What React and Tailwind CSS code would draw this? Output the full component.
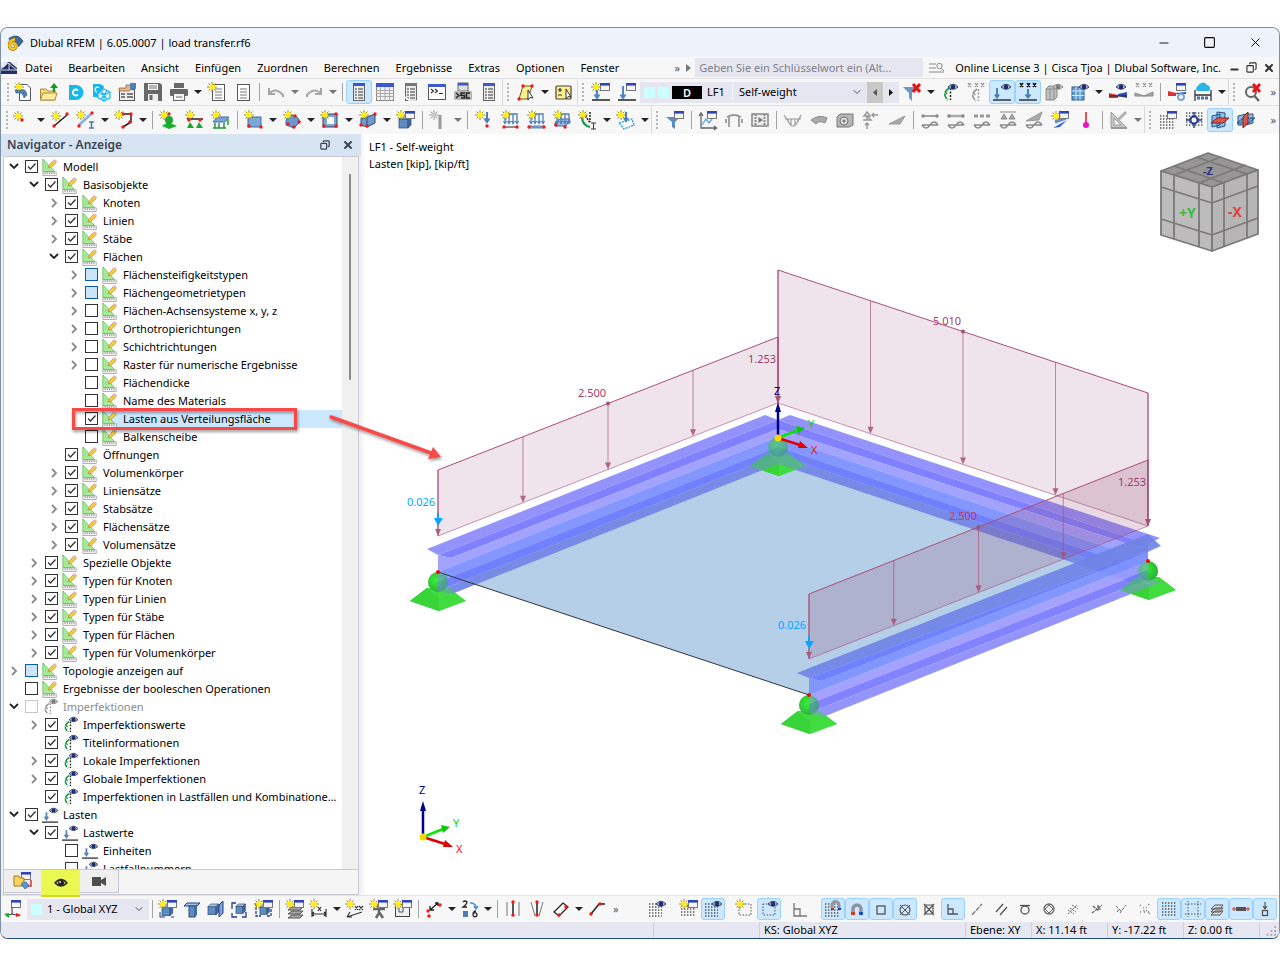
import React from 'react';
import { Minus, Square, X, Copy, ChevronDown } from 'lucide-react';

/* ---------- small parts shared by the toolbar icons ---------- */

const Star = ({ x = 4, y = 4, gray }) => (
  <g transform={`translate(${x} ${y})`}>
    <path d="M0-5V5M-5 0H5M-3.500-3.500L3.500 3.500M3.500-3.500L-3.500 3.500" stroke={gray ? '#a0a0a0' : '#9a8c20'} strokeWidth="1" />
    <circle r="2.8" fill={gray ? '#c8c8c8' : '#ffee10'} />
  </g>
);

const Eye = ({ x = 13, y = 4, gray }) => (
  <g transform={`translate(${x} ${y})`}>
    <path d="M-5 0Q0-5.500 5 0Q0 4.500 -5 0Z" fill={gray ? '#c4c4c4' : '#a9b4d0'} stroke={gray ? '#8a8a8a' : '#35426f'} strokeWidth="1" />
    <circle r="2.2" fill={gray ? '#7c7c7c' : '#1d2a6b'} />
  </g>
);

const Win = ({ x = 9, y = 0 }) => (
  <g transform={`translate(${x} ${y})`}>
    <rect x=".5" y=".5" width="9" height="7" fill="#f4f4f4" stroke="#777" />
    <rect width="10" height="2.6" fill="#2f45b5" />
  </g>
);

const Dot = ({ x, y, c = '#f01818' }) => <circle cx={x} cy={y} r="1.7" fill={c} />;

const Page = ({ x = 3, y = 1, w = 12, h = 16, gray }) => (
  <g>
    <rect x={x + 0.5} y={y + 0.5} width={w} height={h} fill="#fff" stroke={gray ? '#9a9a9a' : '#555'} />
    <path d={`M${x + 3} ${y + 5}H${x + w - 2}M${x + 3} ${y + 8}H${x + w - 2}M${x + 3} ${y + 11}H${x + w - 2}M${x + 3} ${y + 14}H${x + w - 2}`} stroke={gray ? '#aaa' : '#777'} />
  </g>
);

const Lens = () => (
  <g fill="none">
    <circle cx="8" cy="9" r="5" stroke="#666" strokeWidth="2" />
    <path d="M11.500 13L16 18" stroke="#666" strokeWidth="2.500" />
  </g>
);

const GridDots = ({ x = 1, y = 4, w = 14, h = 14 }) => (
  <g stroke="#555" strokeWidth="1.400" strokeDasharray="1.400 1.600">
    {[0, 3, 6, 9, 12].filter((r) => r <= h).map((r) => (
      <path key={r} d={`M${x} ${y + r + 1}h${w}`} />
    ))}
  </g>
);

const Cube = ({ x = 4, y = 5, s = 9 }) => (
  <g transform={`translate(${x} ${y})`} stroke="#2c4a70" strokeWidth=".7">
    <rect y={s / 3} width={s} height={s} fill="#5f8cc0" />
    <path d={`M0 ${s / 3}L${s / 3} 0H${s + s / 3}L${s} ${s / 3}Z`} fill="#a9c6e6" />
    <path d={`M${s} ${s / 3}L${s + s / 3} 0V${s}L${s} ${s + s / 3}Z`} fill="#3f6ea5" />
  </g>
);

const LoadArrows = () => (
  <g stroke="#4d7fb5" strokeWidth="1.300" fill="none">
    <path d="M4 3H16V8M4 3V12M8 3V12M12 3V12M16 5V12" />
    <path d="M2.500 10L4 12.500L5.500 10M6.500 10L8 12.500L9.500 10M10.500 10L12 12.500L13.500 10M14.500 10L16 12.500L17.500 10" />
  </g>
);

const Wave = ({ y = 14 }) => <path d={`M1 ${y}H17M1 ${y}Q5 ${y + 6} 9 ${y}Q13 ${y - 6} 17 ${y}`} fill="none" stroke="#8a8a8a" strokeWidth="1.500" />;

const Sheet = ({ gray }) => (
  <g>
    <rect x="3.500" y=".5" width="11" height="17" fill="#e8e8e8" stroke="#666" />
    <rect x="3" y="0" width="12" height="3" fill={gray ? '#777' : '#3c57cf'} />
    <path d="M5 6H13M5 9H13M5 12H13M5 15H13" stroke="#777" strokeWidth="1.500" />
    <path d="M7.500 4V17" stroke="#fff" />
  </g>
);

const Imperfection = ({ gray }) => (
  <g fill="none">
    <path d="M8 5Q0 11 7 17" stroke={gray ? '#999' : '#1d9a48'} strokeWidth="1.800" strokeDasharray="6 1" />
    <path d="M9.500 5V17" stroke={gray ? '#999' : '#222'} strokeWidth="1.500" strokeDasharray="2 1.500" />
    <path d="M4 9L6.500 11" stroke={gray ? '#999' : '#1d9a48'} strokeWidth="1.500" />
  </g>
);

const ICONS = {
  'Neues Modell': <g><path d="M5.500 1.500H13L16.500 5V17.500H5.500Z" fill="#fff" stroke="#555" /><path d="M1 7H6Q12 5 13 12L10 15Q9 10 6 10H2Z" fill="#4e7fb6" stroke="#315c8c" strokeWidth=".6" /><Star x={5} y={4} /></g>,
  'Öffnen': <g><path d="M.5 17V6H6L8 8H15V17Z" fill="#f6dc7c" stroke="#ad8c34" /><path d="M.5 17L3 10H17L15 17Z" fill="#fdeca4" stroke="#ad8c34" /><path d="M14 9V4" stroke="#139a2a" strokeWidth="2.500" /><path d="M10 5L14 0L18 5Z" fill="#139a2a" /></g>,
  'Dlubal Center': <g><path d="M3 2H10A7 7 0 0 1 10 17H3Z" fill="#17b7e8" /><path d="M12 7.500A3 3 0 1 0 12 11.500" fill="none" stroke="#fff" strokeWidth="1.800" /></g>,
  'Cloud-Modell': <g><path d="M1 1H8Q12 2 12 5L8 8V14H1Z" fill="#17b7e8" /><path d="M7 4.500A2.500 2.500 0 1 0 5 9" fill="none" stroke="#fff" strokeWidth="1.300" /><path d="M12 6L18 9V15L12 18L6 15V9ZM6 9L12 12L18 9M12 12V18M9 7.500L15 16.500M15 7.500L9 16.500" fill="#d8f3fb" stroke="#17b7e8" strokeWidth="1.200" /></g>,
  'Modelldaten': <g><rect x="1.500" y="6.500" width="15" height="11" fill="#eee" stroke="#555" /><path d="M3 11H7M9 11H15M3 14H7M9 14H15" stroke="#555" strokeWidth="1.500" /><path d="M1 5H8V2H12L15 5L11 8H1Z" fill="#e7b58b" stroke="#8a5a35" strokeWidth=".7" /><rect x="12" y="0" width="6" height="6" fill="#4e7fb6" /></g>,
  'Speichern': <g><path d="M0 0H16L18 2V18H0Z" fill="#696969" /><rect x="4" y="1" width="10" height="6" fill="#f4f4f4" /><path d="M5 3H13M5 5H13" stroke="#777" /><rect x="4" y="11" width="10" height="7" fill="#eee" /><rect x="5.500" y="12" width="3" height="5" fill="#696969" /></g>,
  'Drucken': <g><rect x="4" y="0" width="10" height="5" fill="#696969" /><rect x="0" y="6" width="18" height="7" rx="1" fill="#696969" /><rect x="3.500" y="10.500" width="11" height="7" fill="#f4f4f4" stroke="#696969" /><path d="M6 14H12" stroke="#696969" /></g>,
  'Neues Protokoll': <g><Page x={4} /><Star x={4} y={4} /></g>,
  'Protokoll': <Page />,
  'Rückgängig': <path d="M2 5V11H8M2.500 10Q9 4 16 12V14" fill="none" stroke="#a5a5a5" strokeWidth="2" />,
  'Wiederholen': <path d="M16 5V11H10M15.500 10Q9 4 2 12V14" fill="none" stroke="#a5a5a5" strokeWidth="2" />,
  'Navigator': <Sheet />,
  'Tabellen': <g><rect x=".5" y=".5" width="17" height="17" fill="#f2f2f2" stroke="#888" /><rect width="18" height="4" fill="#3c57cf" /><path d="M0 7.500H18M0 10.500H18M0 13.500H18M4.500 4V18M9 4V18M13.500 4V18" stroke="#a8a8a8" /></g>,
  'Ergebnistabelle': <g><Sheet gray /><path d="M3 14L8 18H15" stroke="#fff" strokeWidth="1.500" fill="none" /></g>,
  'Konsole': <g><rect x=".5" y="1.500" width="17" height="15" fill="#fff" stroke="#555" /><rect y="1" width="18" height="3" fill="#3c57cf" /><path d="M3 6L5.500 8L3 10M7 6L9.500 8L7 10M11 10.500H15" fill="none" stroke="#333" strokeWidth="1.200" /></g>,
  'Skript': <g><rect x="4" y="0" width="10" height="8" fill="#ddd" stroke="#666" /><rect x="4" width="10" height="2.500" fill="#3c57cf" /><rect x="0" y="8" width="18" height="9" rx="1" fill="#b8b8b8" /><path d="M2 10L5 12.500L2 15M11 10H7V12.500H10.500V15H7M16 10H12.500V15H16" stroke="#222" strokeWidth="1.500" fill="none" /></g>,
  'Manager': <Sheet />,
  'Auswahl': <g><path d="M6 3H15L11 16H2Z" fill="#fdf08a" stroke="#6d5a1e" /><Dot x={6} y={3} /><Dot x={15} y={3} /><Dot x={2} y={16} /><path d="M11 7V17L13 14.500L16 15Z" fill="#fff" stroke="#333" /></g>,
  'Objekte wählen': <g><rect x="1" y="3" width="15" height="13" rx="1" fill="#fdf08a" stroke="#444" strokeWidth="1.200" /><path d="M3 7H7M5 5V9M3 12H7" stroke="#333" strokeWidth="1.200" /><path d="M11 6V16L13 13.500L16 14Z" fill="#fff" stroke="#333" /></g>,
  'Neuer Lastfall': <g><Win x={8} /><Star x={4} y={4} /><path d="M5 7V14M2.500 11.500L5 15L7.500 11.500" stroke="#4d86c2" strokeWidth="2" fill="none" /><path d="M0 17H18" stroke="#222" strokeWidth="1.500" /></g>,
  'Lastfall bearbeiten': <g><Win x={8} /><path d="M5 3V14M2.500 11.500L5 15L7.500 11.500" stroke="#4d86c2" strokeWidth="2" fill="none" /><path d="M0 17H18" stroke="#222" strokeWidth="1.500" /></g>,
  'Filter aus': <g><path d="M0 4H14L9 10V18L6 15V10Z" fill="#6b97c8" /><path d="M10 1L17 9M17 1L10 9" stroke="#ee1010" strokeWidth="3" /></g>,
  'Imperfektionen anzeigen': <g><Imperfection /><Eye x={12} /></g>,
  'Imperfektionswerte': <g><path d="M1 0L4 4M4 0L1 4M8 0L11 4M11 0L8 4M14 0L17 4M17 0L14 4" stroke="#888" strokeWidth="1.200" /><g transform="translate(2 1)"><Imperfection gray /></g></g>,
  'Lasten anzeigen': <g><path d="M4 5V14M2 11.500L4 14.500L6 11.500" stroke="#4d7fb5" strokeWidth="2" fill="none" /><path d="M0 17H18" stroke="#333" strokeWidth="1.500" /><Eye /></g>,
  'Lastwerte': <g><path d="M1 0L4 4M4 0L1 4M8 0L11 4M11 0L8 4M14 0L17 4M17 0L14 4" stroke="#111" strokeWidth="1.500" /><path d="M9 6V14M6.500 11.500L9 14.500L11.500 11.500" stroke="#4d7fb5" strokeWidth="2" fill="none" /><path d="M0 17H18" stroke="#333" strokeWidth="1.500" /></g>,
  'Körper anzeigen': <g><path d="M1 6L4 3H12V14L9 17H1Z" fill="#c0c0c0" stroke="#8a8a8a" /><path d="M1 6H9V17M5 6V17M9 6L12 3" stroke="#8a8a8a" fill="none" /><Eye gray /></g>,
  'Netz anzeigen': <g><rect x="1" y="4" width="12" height="13" fill="#5f9ad0" stroke="#2c5f92" /><path d="M5 4V17M9 4V17M1 8H13M1 12.500H13" stroke="#d5e6f5" /><Eye /></g>,
  'Ergebnisse anzeigen': <g><path d="M0 10L9 12V15H0Z" fill="#d63535" /><path d="M18 15L9 13V11L18 9Z" fill="#2c51b8" /><path d="M0 13H18" stroke="#222" strokeWidth="1.200" /><Eye x={12} /></g>,
  'Ergebniswerte': <g><path d="M1 0L4 4M4 0L1 4M8 0L11 4M11 0L8 4M14 0L17 4M17 0L14 4" stroke="#888" strokeWidth="1.200" /><path d="M0 10L9 13H0ZM9 13L18 9V13Z" fill="#aaa" stroke="#888" /></g>,
  'Ergebnis-Einstellungen': <g><Win x={8} /><path d="M0 8L8 10V13H0Z" fill="#d63535" /><path d="M6 11H18V9L8 10Z" fill="#2c51b8" /><circle cx="13" cy="14" r="3" fill="#fff" stroke="#7ea4d4" strokeWidth="2" /></g>,
  'Cloud-Berechnung': <g><path d="M3 8A3 3 0 0 1 4 3A5 5 0 0 1 13 2A3.500 3.500 0 0 1 15 8Z" fill="#2bb5e6" /><path d="M1 7V18M17 7V18M1 12H17" stroke="#333" strokeWidth="1.300" /><path d="M3 15H15" stroke="#4b6cb0" strokeWidth="3" strokeDasharray="3 1" /></g>,
  'Zoom zurücksetzen': <g><Lens /><path d="M10 1L17 9M17 1L10 9" stroke="#ee1010" strokeWidth="2.800" /></g>,
  'Knoten': <g><Star x={5} y={5} /><Dot x={9} y={9} /></g>,
  'Linie': <g><path d="M3 15L16 4" stroke="#222" strokeWidth="1.500" /><Dot x={3} y={15} /><Dot x={16} y={3} /><Star x={5} y={5} /></g>,
  'Stab': <g><path d="M2 14L14 3" stroke="#8bb4e0" strokeWidth="3" /><Dot x={2} y={15} /><Dot x={15} y={2} /><path d="M12 11H17M12 17H17M14.500 11V17" stroke="#52759e" strokeWidth="1.500" /><Star x={4} y={4} /></g>,
  'Polylinie': <g><path d="M7 3H16V11L8 16" stroke="#222" fill="none" strokeWidth="1.500" /><Dot x={8} y={3} /><Dot x={16} y={3} /><Dot x={15} y={11} /><Dot x={8} y={16} /><Star x={4} y={4} /></g>,
  'Knotenlager': <g><path d="M8 11L17 15L9 18L2 15Z" fill="#18b32a" /><circle cx="9" cy="9" r="4" fill="#22a535" /><Dot x={9} y={3} /><Star x={4} y={4} /></g>,
  'Linienlager': <g><path d="M1 8H17" stroke="#222" strokeWidth="1.500" /><path d="M1 17L4 11L8 17ZM10 17L13 11L17 17Z" fill="#18a82a" /><Dot x={3} y={9} /><Dot x={14} y={9} /><Star x={4} y={4} /></g>,
  'Flächenlager': <g><path d="M1 11L5 6H17L13 11Z" fill="#7ba6d6" stroke="#3f6ea5" /><path d="M3 12V17M7 12V17M12 12V17M16 8V14M1 17H14" stroke="#1f9a35" strokeWidth="1.500" /><Star x={4} y={4} /></g>,
  'Fläche': <g><rect x="3" y="6" width="13" height="10" fill="#7ba6d6" stroke="#3f6ea5" /><Dot x={4} y={15} /><Dot x={16} y={16} /><Star x={4} y={4} /></g>,
  'Gekrümmte Fläche': <g><path d="M3 14Q2 6 8 4Q15 4 17 11L11 17Z" fill="#6d9ace" stroke="#3f6ea5" /><Dot x={12} y={5} /><Dot x={5} y={13} /><Dot x={11} y={16} /><Dot x={16} y={11} /><Star x={5} y={4} /></g>,
  'Öffnung': <g><rect x="2" y="3" width="14" height="13" fill="#7ba6d6" stroke="#345" /><rect x="6" y="6" width="7" height="7" fill="#fff" /><Dot x={15} y={3} /><Dot x={3} y={15} /><Dot x={15} y={15} /><Star x={4} y={4} /></g>,
  'Volumen': <g><path d="M2 8L8 6L16 3V12L8 16L2 14Z" fill="#6d9ace" stroke="#2c4a70" /><path d="M8 6V16" stroke="#2c4a70" /><Dot x={16} y={3} /><Dot x={8} y={15} /><Dot x={2} y={14} /><Star x={5} y={4} /></g>,
  'Objektdialog': <g><Cube x={2} y={5} s={9} /><Win x={8} /><Star x={4} y={4} /></g>,
  'Gelenk': <g><path d="M10 4V18" stroke="#999" strokeWidth="3" /><Star gray /></g>,
  'Knotenlast': <g><path d="M12 1V10M9.500 7.500L12 11L14.500 7.500" stroke="#4d7fb5" strokeWidth="2" fill="none" /><Dot x={12} y={15} /><Star x={5} y={4} /></g>,
  'Stablast': <g><LoadArrows /><path d="M2 16H17" stroke="#222" /><Dot x={3} y={16} /><Dot x={16} y={16} /><Star x={5} y={4} /></g>,
  'Linienlast': <g><LoadArrows /><path d="M2 16H17" stroke="#6c93bd" strokeWidth="3" /><Dot x={2} y={16} /><Dot x={17} y={16} /><Star x={5} y={4} /></g>,
  'Flächenlast': <g><path d="M2 12L7 8H17L13 15H2Z" fill="#9dbfe3" stroke="#3f6ea5" /><LoadArrows /><Dot x={3} y={14} /><Dot x={12} y={16} /><Star x={5} y={4} /></g>,
  'Imperfektion': <g><path d="M3 3Q2 14 11 16" stroke="#1d9a48" strokeWidth="2" fill="none" /><path d="M5 2L11 12M11 1V11" stroke="#222" strokeDasharray="2 1" strokeWidth="1.500" fill="none" /><path d="M12 12H17M12 18H17M14.500 12V18" stroke="#333" /><Star x={4} y={4} /></g>,
  'Freie Last': <g><path d="M2 12L15 8L17 14L7 18Z" fill="none" stroke="#2a9bd6" strokeDasharray="2 1" strokeWidth="1.300" /><path d="M9 1V9M7 7L9 10L11 7" stroke="#4d7fb5" strokeWidth="2" fill="none" /><Star x={4} y={4} /></g>,
  'Filter': <g><path d="M0 6H14L9 11V18L6 16V11Z" fill="#5f8cc0" /><Win x={8} /></g>,
  'Diagramm': <g><path d="M2 3V17H17M0 5L2 2L4 5M15 15L17.500 17L15 19" fill="none" stroke="#666" strokeWidth="1.300" /><path d="M3 14L7 8L10 12L13 8" stroke="#5aa2e0" fill="none" strokeWidth="1.300" /><Win x={8} /></g>,
  'Schnitt': <path d="M2 6Q9 2 16 6M4 6V16M14 6V16M1 8V12M17 8V12" fill="none" stroke="#999" strokeWidth="1.800" />,
  'Animation': <g><rect x="1" y="3" width="16" height="12" fill="#eee" stroke="#888" strokeWidth="1.500" /><path d="M4.500 3V15M13.500 3V15" stroke="#888" strokeWidth="2" strokeDasharray="2 1" /><path d="M7.500 6L12 9L7.500 12Z" fill="#777" /></g>,
  'Verlauf': <path d="M0 4L4 10Q9 20 14 10L17 4M1 8H17M4 8V11M7 8V14M11 8V14M14 8V11" fill="none" stroke="#999" strokeWidth="1.200" />,
  'Flächenverlauf': <path d="M1 9Q9 3 17 7L15 12Q9 9 6 13Z" fill="#aaa" stroke="#8a8a8a" />,
  'Körperverlauf': <g><path d="M1 6L4 3H17V14L13 16H1Z" fill="#b5b5b5" stroke="#777" /><circle cx="8" cy="10" r="4" fill="#ddd" stroke="#777" /><circle cx="8" cy="10" r="1.500" fill="#777" /></g>,
  'Reaktionen': <path d="M5 1L8 5H2ZM5 5V9M1 9H9L5 5M10 4H16M12 2L10 4L12 6M5 18V12M3 14L5 12L7 14" fill="none" stroke="#999" strokeWidth="1.500" />,
  'Spannung': <path d="M1 13L17 5L12 13Z" fill="#aaa" stroke="#999" />,
  'Linie A': <g><path d="M1 5H17" stroke="#888" strokeWidth="1.500" /><Dot x={2} y={5} c="#888" /><Dot x={16} y={5} c="#888" /><Wave /></g>,
  'Linie B': <g><path d="M1 5H17" stroke="#aaa" strokeWidth="2.500" /><Dot x={2} y={5} c="#888" /><Dot x={16} y={5} c="#888" /><Wave /></g>,
  'Linie C': <g><path d="M1 5H17" stroke="#999" strokeWidth="3" strokeDasharray="4 2" /><Wave /></g>,
  'Linie D': <g><path d="M1 1H17M2 8L5 3L8 8ZM10 8L13 3L16 8Z" stroke="#888" fill="#aaa" /><Wave /></g>,
  'Linie E': <g><path d="M1 10L17 1L14 9Z" fill="#aaa" stroke="#999" /><Wave /></g>,
  'Ergebnisdialog': <g><path d="M2 17L16 9L9 16Z" fill="#2f62d8" /><path d="M4 11L15 7" stroke="#5c8be0" strokeWidth="3" /><Win x={8} /><Star x={5} y={5} /></g>,
  'Ergebnispunkt': <g><path d="M9 1V12" stroke="#e21818" strokeWidth="1.500" /><circle cx="9" cy="14" r="3" fill="#e815c8" /></g>,
  'Darstellung': <g><path d="M1 1V17H17ZM4 7V14H11Z" fill="#c8c8c8" stroke="#999" fillRule="evenodd" /><path d="M8 9L16 1" fill="none" stroke="#b0b0b0" strokeWidth="3" /><path d="M1 17H17" stroke="#999" strokeWidth="2" /></g>,
  'Rasterdialog': <g><GridDots /><Win x={8} /></g>,
  'Raster': <g><GridDots x={1} y={1} w={17} /><path d="M9 1V17M1 9H17" stroke="#24389c" strokeWidth="1.500" /><circle cx="9" cy="9" r="3.500" fill="#fff" stroke="#24389c" strokeWidth="2" /></g>,
  'Arbeitsebene XY': <g><path d="M6 1L14 2V15L6 17Z" fill="#8fc0ea" stroke="#28527f" /><path d="M1 5L9 3V14L1 16Z" fill="#4d8fd0" fillOpacity=".5" stroke="#28527f" /><path d="M0 12L6 7H18L12 12Z" fill="#e5503f" fillOpacity=".9" stroke="#7c241c" /></g>,
  'Arbeitsebene YZ': <g><path d="M1 5L9 3H16V12L9 14H1Z" fill="#8fc0ea" stroke="#28527f" /><path d="M0 12L6 7H18L12 12Z" fill="#4d8fd0" fillOpacity=".6" stroke="#28527f" /><path d="M6 6L11 1V12L6 17Z" fill="#e5503f" fillOpacity=".9" stroke="#7c241c" /></g>,
  'Koordinatensystem': <g><Win x={7} /><path d="M8 7V14L2 16M8 14L16 16" stroke="#333" fill="none" /><path d="M0 14L5 13V18Z" fill="#18a82a" /><path d="M17 15L12 13V17Z" fill="#f01818" /></g>,
  'Ansicht isometrisch': <g><path d="M1 12V17H6M12 17H15" fill="none" stroke="#24389c" /><Cube x={3} y={5} s={8} /><Win x={8} /><Star /></g>,
  'Ansicht vorne': <g><path d="M1 6L4 3H17L14 6Z" fill="#a9c6e6" stroke="#24389c" /><rect x="6" y="6" width="6" height="11" fill="#5f8cc0" stroke="#2c4a70" /><path d="M12 6L14 4V15L12 17Z" fill="#3f6ea5" /></g>,
  'Ansicht Seite': <g><Cube x={1} y={4} s={8} /><path d="M12 5L16 1V13L12 17Z" fill="#7ba6d6" stroke="#24389c" /></g>,
  'Ansicht oben': <g><path d="M1 9V3H5M1 13V17H6M15 12V17H11" fill="none" stroke="#24389c" strokeWidth="1.300" /><Cube x={5} y={4} s={7} /></g>,
  'Ansicht drehen': <g><path d="M1 3V16H6M16 5V16H12" fill="none" stroke="#24389c" strokeWidth="1.300" strokeDasharray="3 1" /><Cube x={5} y={5} s={7} /><Win x={8} /><Star /></g>,
  'Schichten': <g><path d="M2 10L6 7H17L14 10ZM2 14L6 11H17L14 14ZM2 18L6 15H17L14 18Z" fill="#aaa" stroke="#555" /><Win x={8} /><Star /></g>,
  'Bemaßung': <g><path d="M2 9V17M16 9V17M2 14H16M4 12L2 14L4 16M14 12L16 14L14 16M8 7L11 11M11 7L8 11" stroke="#333" fill="none" strokeWidth="1.200" /><Star /></g>,
  'Bemaßung 2': <g><path d="M1 17L4 12M1 17H6M1 17L16 12M9 6L12 10M12 6L9 10M13 6L17 10M17 6L13 10" stroke="#333" fill="none" strokeWidth="1.200" /><Star /></g>,
  'Person': <g><circle cx="9" cy="6" r="2" fill="#666" /><path d="M3 9H15M9 9V13L6 18M9 12L13 18" stroke="#666" strokeWidth="2.500" fill="none" /><Win x={8} /><Star /></g>,
  'Ausschnitt': <g><rect x="1.500" y="4.500" width="14" height="12" fill="#eee" stroke="#444" /><path d="M5 8V12H9V8" fill="none" stroke="#555" /><Win x={8} /><Star /></g>,
  'Verschieben': <g><path d="M5 10L13 3M5 6V10H9M10 3H13V6" stroke="#222" strokeWidth="1.300" fill="none" /><Dot x={3} y={11} /><Dot x={15} y={5} /><Dot x={4} y={16} /></g>,
  'Nummerieren': <g><path d="M2 2Q4 0 6 2Q6 4 2 7H6M15 11Q12 11 12 15A2 2 0 1 0 13 13" stroke="#222" strokeWidth="1.300" fill="none" /><path d="M9 3Q15 3 15 8M13 6L15 9L17 6" stroke="#4d8fd0" strokeWidth="1.500" fill="none" /><rect x="2" y="11" width="5" height="6" fill="#4b7fba" /></g>,
  'Parallel': <g><path d="M3 2V16M15 2V16" stroke="#777" /><path d="M9 2V16" stroke="#222" strokeWidth="1.500" /><Dot x={9} y={2} /><Dot x={9} y={15} /></g>,
  'Winkel': <g><path d="M3 2L7 16M15 2L11 16" stroke="#777" /><path d="M9 2V16" stroke="#222" strokeWidth="1.500" /><Dot x={9} y={2} /><Dot x={9} y={15} /></g>,
  'Rechteck': <g><path d="M2 12L11 3L16 7L7 16Z" stroke="#222" fill="none" strokeWidth="1.300" /><Dot x={7} y={15} /><Dot x={14} y={7} /></g>,
  'Tangente': <g><path d="M3 14L11 4H17" stroke="#222" fill="none" strokeWidth="1.500" /><Dot x={3} y={14} /><Dot x={12} y={4} /></g>,
  'Raster anzeigen': <g><GridDots x={1} y={3} w={13} /><Eye /></g>,
  'Raster neu': <g><GridDots x={1} y={5} w={15} h={10} /><Win x={8} /><Star /></g>,
  'Hintergrund': <g><path d="M3 4H15V15H3Z" fill="none" stroke="#555" strokeDasharray="1.500 1.500" /><Star /></g>,
  'Hintergrund anzeigen': <g><path d="M3 4H15V15H3Z" fill="none" stroke="#555" strokeDasharray="1.500 1.500" /><Eye /></g>,
  'Ortho': <path d="M2 3V16H15M2 9H8V16" fill="none" stroke="#777" strokeWidth="1.300" />,
  'Rasterfang': <g><GridDots x={1} y={3} w={15} /><path d="M8 8V5A3.500 3.500 0 0 1 15 5V8" fill="none" stroke="#9295a0" strokeWidth="3" /><path d="M7 9H10" stroke="#d03018" strokeWidth="2" /><path d="M14 9H17" stroke="#1840c0" strokeWidth="2" /></g>,
  'Magnet': <g><path d="M5 14V9A4 4 0 0 1 13 9V14" fill="none" stroke="#8f92a2" strokeWidth="3.500" /><path d="M3 13.500H7" stroke="#d83818" strokeWidth="3" /><path d="M11 13.500H15" stroke="#1c48c8" strokeWidth="3" /></g>,
  'Fang Ecke': <rect x="5" y="6" width="8" height="8" fill="none" stroke="#555" strokeWidth="1.300" />,
  'Fang Mitte': <g><circle cx="9" cy="10" r="5" fill="none" stroke="#555" strokeWidth="1.200" /><path d="M4 5L14 15M14 5L4 15" stroke="#555" /></g>,
  'Fang Schnitt': <path d="M5 5H13V14H5ZM4 4L14 15M14 4L4 15" fill="none" stroke="#555" strokeWidth="1.200" />,
  'Fang Lot': <path d="M4 4V14H14M4 9H9V14" fill="none" stroke="#555" strokeWidth="1.300" />,
  'Fang Verlängerung': <path d="M4 15L14 4" fill="none" stroke="#777" strokeWidth="1.300" strokeDasharray="5 1" />,
  'Fang Parallel': <path d="M4 12L11 4M8 15L15 7" fill="none" stroke="#555" strokeWidth="1.300" />,
  'Fang Tangente': <g><circle cx="9" cy="10" r="4" fill="none" stroke="#555" strokeWidth="1.300" /><path d="M4 5.500H14" stroke="#555" strokeWidth="1.300" /></g>,
  'Fang Quadrant': <g><circle cx="9" cy="9" r="5" fill="none" stroke="#666" strokeWidth="1.300" /><path d="M9 5L13 9L9 13L5 9Z" fill="none" stroke="#666" /></g>,
  'Fang Netz': <path d="M4 10L10 14M6 8L12 12M8 5L14 9M4 14L13 5" fill="none" stroke="#666" strokeDasharray="2 1" />,
  'Fang Linie': <path d="M4 13L14 5M5 6L11 11M10 5V9H14" fill="none" stroke="#555" strokeWidth="1.200" strokeDasharray="3 1" />,
  'Fang Teilung': <path d="M4 6L9 11M8 13L14 5M5 12L7 9" fill="none" stroke="#666" strokeDasharray="3 1" />,
  'Fang Punkte': <path d="M4 5L14 14M13 4L6 13M4 12H15" fill="none" stroke="#777" strokeDasharray="1 3" strokeWidth="1.300" />,
  'Anzeige Raster': <GridDots x={2} y={2} w={15} />,
  'Anzeige Rahmen': <path d="M4 1V17M14 1V17M1 4H17M1 14H17" fill="none" stroke="#555" strokeDasharray="1.500 1.500" />,
  'Anzeige Ebenen': <path d="M3 9L7 5H15L12 9ZM3 12L7 8H15L12 12ZM3 15L7 11H15L12 15Z" fill="#ddd" stroke="#555" />,
  'Anzeige Stab': <g><path d="M4 9H14" stroke="#555" strokeWidth="4" /><path d="M0 9H4M14 9H18M2 7V11M16 7V11" stroke="#e03030" /></g>,
  'Anzeige Last': <g><path d="M9 2V8M7 6L9 9L11 6" stroke="#555" fill="none" strokeWidth="1.200" /><rect x="6.500" y="10.500" width="5" height="5" fill="none" stroke="#555" strokeWidth="1.300" /></g>,
  'Daten': <g><Win x={7} /><path d="M0 4H5L6 6H10V14H0Z" fill="#fbd25a" stroke="#a87b18" /><path d="M10 14H17V8" stroke="#d63535" strokeWidth="1.500" fill="none" /><path d="M7 12Q12 7 15 14L11 17Z" fill="#4e9ad6" stroke="#28527f" strokeWidth=".6" /></g>,
  'Anzeige': <g><path d="M3 9Q9 2 15 9Q9 15 3 9Z" fill="#b8c04a" stroke="#222" strokeWidth="1.300" /><circle cx="9" cy="9" r="3" fill="#222" /><circle cx="8" cy="8" r="1" fill="#ddd" /></g>,
  'Ansichten': <path d="M2 5H11V8L16 5V14L11 11V14H2Z" fill="#4e4e4e" />,
  draw: <g><path d="M1 0V14H14Z" fill="#a9ee98" stroke="#6bbd66" /><path d="M4 7V10H7Z" fill="#fff" stroke="#6bbd66" strokeWidth=".6" /><path d="M7 10L8 7L13 1.500L16 4L10 9.500Z" fill="#f8cc3c" stroke="#b08a30" strokeWidth=".8" /><path d="M12.500 2L14 0L17 2.500L15.500 4.500Z" fill="#e8b4bc" /><rect x="1" y="14.500" width="15" height="4" fill="#f4f4f4" stroke="#999" strokeWidth=".8" /><path d="M3.500 15V17M6 15V17M8.500 15V17M11 15V17M13.500 15V17" stroke="#777" strokeWidth=".8" /></g>,
  imp: <g><Imperfection /><Eye x={13} y={3} /></g>,
  impGray: <g><Imperfection gray /><Eye x={13} y={3} gray /></g>,
  load: <g><path d="M5 6V13M3 11L5 14L7 11" stroke="#5a87b8" strokeWidth="2" fill="none" /><path d="M0 17H18" stroke="#333" strokeWidth="1.500" /><Eye x={13} /></g>,
};

const Icon = ({ name }) => (
  <svg viewBox="0 0 18 18" className="w-[18px] h-[18px] shrink-0 overflow-visible" aria-hidden="true">{ICONS[name]}</svg>
);

/* ---------- toolbars: '|' line, '!' end of group, 'v' menu arrow, '*' pressed ---------- */

const ROW_1A = ['Neues Modell', 'Öffnen', 'Dlubal Center', 'Cloud-Modell', 'Modelldaten', 'Speichern', 'Drucken', 'v', 'Neues Protokoll', 'Protokoll', '|', 'Rückgängig', 'v-', 'Wiederholen', 'v-', '|', '*Navigator', 'Tabellen', 'Ergebnistabelle', 'Konsole', 'Skript', 'Manager', '!', 'Auswahl', 'v', 'Objekte wählen', '!', 'Neuer Lastfall', 'Lastfall bearbeiten'];
const ROW_1B = ['Filter aus', 'v', 'Imperfektionen anzeigen', 'Imperfektionswerte', '*Lasten anzeigen', '*Lastwerte', 'Körper anzeigen', 'Netz anzeigen', 'v', 'Ergebnisse anzeigen', 'Ergebniswerte', '|', 'Ergebnis-Einstellungen', 'Cloud-Berechnung', 'v', '!', 'Zoom zurücksetzen'];
const ROW_2 = ['Knoten', 'v', 'Linie', 'Stab', 'v', 'Polylinie', 'v', '|', 'Knotenlager', 'Linienlager', 'Flächenlager', '|', 'Fläche', 'v', 'Gekrümmte Fläche', 'v', 'Öffnung', 'v', 'Volumen', 'v', 'Objektdialog', '|', 'Gelenk', 'v-', '|', 'Knotenlast', 'Stablast', 'Linienlast', 'Flächenlast', 'Imperfektion', 'v', 'Freie Last', 'v', '!', 'Filter', '|', 'Diagramm', 'Schnitt', 'Animation', '|', 'Verlauf', 'Flächenverlauf', 'Körperverlauf', 'Reaktionen', 'Spannung', '|', 'Linie A', 'Linie B', 'Linie C', 'Linie D', 'Linie E', 'Ergebnisdialog', 'Ergebnispunkt', '|', 'Darstellung', 'v-', '!', 'Rasterdialog', 'Raster', '*Arbeitsebene XY', 'Arbeitsebene YZ'];
const BOTTOM_A = ['|', 'Ansicht isometrisch', 'Ansicht vorne', 'Ansicht Seite', 'Ansicht oben', 'Ansicht drehen', '|', 'Schichten', 'Bemaßung', 'v', 'Bemaßung 2', 'Person', 'Ausschnitt', '|', 'Verschieben', 'v', 'Nummerieren', 'v', '|', 'Parallel', 'Winkel', 'Rechteck', 'v', 'Tangente'];
const BOTTOM_B = ['Raster anzeigen', ' ', 'Raster neu', '*Raster anzeigen', ' ', 'Hintergrund', '*Hintergrund anzeigen', ' ', 'Ortho', ' ', '*Rasterfang', '*Magnet', '*Fang Ecke', '*Fang Mitte', 'Fang Schnitt', '*Fang Lot', 'Fang Verlängerung', 'Fang Parallel', 'Fang Tangente', 'Fang Quadrant', 'Fang Netz', 'Fang Linie', 'Fang Teilung', 'Fang Punkte', '*Anzeige Raster', '*Anzeige Rahmen', '*Anzeige Ebenen', '*Anzeige Stab', '*Anzeige Last'];

const Grip = () => <div className="w-[3px] h-[18px] shrink-0 border-l-2 border-dotted border-[#b4b4b4]" />;

const Tools = ({ items, small }) =>
  items.map((item, i) => {
    if (item === '|') return <div key={i} className="w-[7px] h-[18px] shrink-0 flex justify-center"><div className="w-px bg-[#a3a3a3]" /></div>;
    if (item === ' ') return <div key={i} className="w-2 shrink-0" />;
    if (item === '!') {
      return (
        <div key={i} className="w-[11px] self-stretch shrink-0 flex items-center gap-1">
          <div className="w-px self-stretch bg-[#dadada]" />
          <Grip />
        </div>
      );
    }
    if (item[0] === 'v') {
      return (
        <button key={i} aria-label="Weitere" className={`w-3 h-6 shrink-0 flex items-center justify-center ${item === 'v-' ? 'text-[#777]' : 'text-[#222]'}`}>
          <svg viewBox="0 0 8 4" className="w-[8px] h-[4px]"><path d="M0 0H8L4 4Z" fill="currentColor" /></svg>
        </button>
      );
    }
    const active = item[0] === '*';
    const name = active ? item.slice(1) : item;
    return (
      <button
        key={i}
        aria-label={name}
        className={`shrink-0 flex items-center justify-center rounded-[3px] border ${small ? 'w-6 h-[22px]' : 'w-[26px] h-6'} ${active ? 'bg-[#cce8ff] border-[#99d1ff]' : 'border-transparent'}`}
      >
        <Icon name={name} />
      </button>
    );
  });

/* ---------- navigator tree: [level, arrow, check, icon, label] ---------- */

const TREE = [
  [0, 'open', 'on', 'draw', 'Modell'],
  [1, 'open', 'on', 'draw', 'Basisobjekte'],
  [2, 'closed', 'on', 'draw', 'Knoten'],
  [2, 'closed', 'on', 'draw', 'Linien'],
  [2, 'closed', 'on', 'draw', 'Stäbe'],
  [2, 'open', 'on', 'draw', 'Flächen'],
  [3, 'closed', 'part', 'draw', 'Flächensteifigkeitstypen'],
  [3, 'closed', 'part', 'draw', 'Flächengeometrietypen'],
  [3, 'closed', 'off', 'draw', 'Flächen-Achsensysteme x, y, z'],
  [3, 'closed', 'off', 'draw', 'Orthotropierichtungen'],
  [3, 'closed', 'off', 'draw', 'Schichtrichtungen'],
  [3, 'closed', 'off', 'draw', 'Raster für numerische Ergebnisse'],
  [3, '', 'off', 'draw', 'Flächendicke'],
  [3, '', 'off', 'draw', 'Name des Materials'],
  [3, '', 'on', 'draw', 'Lasten aus Verteilungsfläche'],
  [3, '', 'off', 'draw', 'Balkenscheibe'],
  [2, '', 'on', 'draw', 'Öffnungen'],
  [2, 'closed', 'on', 'draw', 'Volumenkörper'],
  [2, 'closed', 'on', 'draw', 'Liniensätze'],
  [2, 'closed', 'on', 'draw', 'Stabsätze'],
  [2, 'closed', 'on', 'draw', 'Flächensätze'],
  [2, 'closed', 'on', 'draw', 'Volumensätze'],
  [1, 'closed', 'on', 'draw', 'Spezielle Objekte'],
  [1, 'closed', 'on', 'draw', 'Typen für Knoten'],
  [1, 'closed', 'on', 'draw', 'Typen für Linien'],
  [1, 'closed', 'on', 'draw', 'Typen für Stäbe'],
  [1, 'closed', 'on', 'draw', 'Typen für Flächen'],
  [1, 'closed', 'on', 'draw', 'Typen für Volumenkörper'],
  [0, 'closed', 'part', 'draw', 'Topologie anzeigen auf'],
  [0, '', 'off', 'draw', 'Ergebnisse der booleschen Operationen'],
  [0, 'open', 'disabled', 'impGray', 'Imperfektionen'],
  [1, 'closed', 'on', 'imp', 'Imperfektionswerte'],
  [1, '', 'on', 'imp', 'Titelinformationen'],
  [1, 'closed', 'on', 'imp', 'Lokale Imperfektionen'],
  [1, 'closed', 'on', 'imp', 'Globale Imperfektionen'],
  [1, '', 'on', 'imp', 'Imperfektionen in Lastfällen und Kombinatione...'],
  [0, 'open', 'on', 'load', 'Lasten'],
  [1, 'open', 'on', 'load', 'Lastwerte'],
  [2, '', 'off', 'load', 'Einheiten'],
  [2, '', 'off', 'load', 'Lastfallnummern'],
];

const INDENT = ['pl-[5px]', 'pl-[25px]', 'pl-[45px]', 'pl-[65px]'];

const CHECK_STYLE = {
  on: 'border-[#333] bg-white',
  off: 'border-[#333] bg-white',
  part: 'border-[#0a5cab] bg-[#cce4f7]',
  disabled: 'border-[#c6c6c6] bg-white',
};

const TreeRow = ({ row }) => {
  const [level, arrow, check, icon, label] = row;
  const selected = label === 'Lasten aus Verteilungsfläche';
  return (
    <li className={`h-[18px] flex items-center ${INDENT[level]}`}>
      <span className="w-4 shrink-0 flex">
        {arrow && (
          <svg viewBox="0 0 10 10" className="w-[10px] h-[10px] overflow-visible" fill="none">
            {arrow === 'open'
              ? <path d="M1 2L5 6L9 2" stroke="#222" strokeWidth="1.800" />
              : <path d="M3 1L7 5L3 9" stroke="#8a8a8a" strokeWidth="1.800" />}
          </svg>
        )}
      </span>
      <label className="flex-1 min-w-0 h-[18px] flex items-center">
        <span className="relative flex shrink-0 mb-[2px]">
          <input
            type="checkbox"
            defaultChecked={check === 'on'}
            disabled={check === 'disabled'}
            className={`peer appearance-none w-[13px] h-[13px] border ${CHECK_STYLE[check]}`}
          />
          <svg viewBox="0 0 13 13" className="hidden peer-checked:block absolute inset-0 pointer-events-none" fill="none">
            <path d="M3 6.500L5.500 9L10.500 3.500" stroke="#333" strokeWidth="1.300" />
          </svg>
        </span>
        <span className={`flex-1 min-w-0 h-[18px] ml-1 flex items-center gap-[5px] ${selected ? 'bg-[#cce8ff]' : ''}`}>
          <svg viewBox="0 0 18 18" className="w-4 h-4 shrink-0 overflow-visible">{ICONS[icon]}</svg>
          <span className={`whitespace-nowrap ${check === 'disabled' ? 'text-[#8a8a8a]' : ''}`}>{label}</span>
        </span>
      </label>
    </li>
  );
};

const Navigator = () => (
  <aside className="w-[360px] shrink-0 flex flex-col bg-[#f0f0f0]">
    <header className="h-[22px] shrink-0 flex items-center bg-[#d7e4f2] pl-[6px] pr-[3px] gap-2 text-[#3b4450]">
      <h2 className="flex-1 text-[12px] font-semibold">Navigator - Anzeige</h2>
      <button aria-label="Abdocken"><Copy size={10} strokeWidth={3} className="-scale-x-100" /></button>
      <button aria-label="Schließen" className="px-1"><X size={12} strokeWidth={4} /></button>
    </header>
    <div className="flex-1 min-h-0 flex flex-col mx-[2px] border border-[#c9c9d6] bg-[#f5f5f5]">
      <div className="flex-1 min-h-0 flex bg-white">
        <ul className="flex-1 min-w-0 overflow-hidden pt-[1px]">
          {TREE.map((row) => <TreeRow key={row[4]} row={row} />)}
        </ul>
        <div className="w-4 shrink-0 bg-[#f0f0f0] flex justify-center pt-[17px]">
          <div className="w-[2px] h-[206px] rounded bg-[#8a8a8a]" />
        </div>
      </div>
      <div role="tablist" className="h-[25px] shrink-0 flex border-t border-[#c9c9d6]">
        <button role="tab" aria-label="Daten" className="w-[37px] h-[23px] flex items-center justify-center bg-[#efefef] border-b border-[#c9c9d6]"><Icon name="Daten" /></button>
        <button role="tab" aria-label="Anzeige" aria-selected="true" className="w-[39px] h-[27px] shrink-0 flex items-center justify-center bg-[#eaf84f] border-b-2 border-[#d3dc1c]"><Icon name="Anzeige" /></button>
        <button role="tab" aria-label="Ansichten" className="w-[39px] h-[23px] flex items-center justify-center bg-[#efefef] border-r border-b border-[#c9c9d6]"><Icon name="Ansichten" /></button>
      </div>
    </div>
  </aside>
);

/* ---------- model view ---------- */

const LOAD = '#a84f78';

const Beam = ({ points, colors, opacity = 1 }) => (
  <g opacity={opacity}>
    {points.map((p, i) => <polygon key={i} points={p} fill={colors[i]} />)}
  </g>
);

const OUTER = ['#9090fb', '#7d7dff', '#a0a0ff', '#8296ff', '#6f7fff', '#7488e6'];
const INNER = ['#7084e6', '#6b7bff', '#7e93ff', '#9c9cff', '#7979ff', '#8c8cfb'];

const Support = ({ x, y, opacity = 1 }) => (
  <g opacity={opacity}>
    <polygon points={`${x - 11},${y + 15} ${x + 11},${y + 15} ${x + 28},${y + 28} ${x + 1},${y + 38} ${x - 28},${y + 28}`} fill="#40dc40" />
    <polygon points={`${x - 11},${y + 15} ${x + 1},${y + 25} ${x + 1},${y + 38} ${x - 28},${y + 28}`} fill="#38d438" />
    <circle cx={x} cy={y + 9} r="10" fill="url(#ball)" />
  </g>
);

const LoadArrow = ({ x, top, bottom }) => (
  <g stroke={LOAD} fill={LOAD}>
    <path d={`M${x} ${top}V${bottom - 6}`} strokeOpacity=".65" />
    <path d={`M${x - 3} ${bottom - 7}H${x + 3}L${x} ${bottom}Z`} stroke="none" fillOpacity=".85" />
  </g>
);

const LineLoad = ({ x1, x2, top1, top2, bottom1, bottom2, opacity }) => (
  <g>
    <polygon points={`${x1},${top1} ${x2},${top2} ${x2},${bottom2} ${x1},${bottom1}`} fill="#8f3f70" fillOpacity={opacity} />
    <path d={`M${x1} ${bottom1}L${x2} ${bottom2}`} stroke={LOAD} strokeOpacity=".6" />
    <path d={`M${x1} ${bottom1}V${top1}L${x2} ${top2}V${bottom2}`} stroke={LOAD} fill="none" />
    {[0, 0.25, 0.5, 0.75, 1].map((t) => (
      <LoadArrow key={t} x={x1 + (x2 - x1) * t} top={top1 + (top2 - top1) * t} bottom={bottom1 + (bottom2 - bottom1) * t} />
    ))}
    <circle cx={(x1 + x2) / 2} cy={(top1 + top2) / 2} r="2" fill={LOAD} />
  </g>
);

const PointLoad = ({ x, y }) => (
  <g fill="#0aa5ff">
    <path d={`M${x - 4} ${y - 6}H${x + 5}L${x} ${y + 2}Z`} />
    <rect x={x - 1} y={y - 11} width="2" height="6" />
  </g>
);

const Axes = ({ x, y }) => (
  <g strokeWidth="2.500" fontSize="11">
    <path d={`M${x} ${y}V${y - 28}`} stroke="#00008c" />
    <path d={`M${x - 3} ${y - 26}H${x + 3}L${x} ${y - 36}Z`} fill="#00008c" />
    <path d={`M${x} ${y}L${x + 20} ${y - 8}`} stroke="#08e808" />
    <path d={`M${x + 18} ${y - 12}L${x + 27} ${y - 10}L${x + 20} ${y - 4}Z`} fill="#08c808" />
    <path d={`M${x} ${y}L${x + 22} ${y + 7}`} stroke="#e00000" />
    <path d={`M${x + 22} ${y + 3}L${x + 30} ${y + 10}L${x + 20} ${y + 10}Z`} fill="#e00000" />
    <circle cx={x} cy={y} r="3.500" fill="#f5d800" />
    <text x={x - 4} y={y - 43} fill="#00008c">Z</text>
    <text x={x + 30} y={y - 10} fill="#08d808">Y</text>
    <text x={x + 33} y={y + 16} fill="#f01010">X</text>
  </g>
);

const ViewCube = () => (
  <g stroke="#7d7878" strokeWidth="1.800" strokeLinejoin="round">
    <polygon points="1208,153 1258,170 1212,187 1161,171" fill="#969696" />
    <polygon points="1161,171 1212,187 1212,251 1161,235" fill="#bcbcbc" />
    <polygon points="1212,187 1258,170 1258,234 1212,251" fill="#b6b6b6" />
    <path d="M1196 157L1247 174V238M1174 166L1224 183V247M1221 157L1174 175V239M1246 165L1199 183V247" fill="none" />
    <path d="M1161 187L1212 203L1258 186M1161 219L1212 235L1258 218" fill="none" />
    <g stroke="none" fontSize="14" fontWeight="bold">
      <text x="1179" y="218" fill="#38bd38">+Y</text>
      <text x="1228" y="217" fill="#e04040">-X</text>
      <text x="1203" y="175" fontSize="11" fill="#303080">-Z</text>
    </g>
  </g>
);

const ModelView = () => (
  <svg viewBox="364 134 915 750" preserveAspectRatio="xMinYMin meet" className="block w-full h-full overflow-visible" role="img" aria-label="Modell mit Lasten">
    <defs>
      <radialGradient id="ball" cx=".4" cy=".4" r=".7">
        <stop offset="0" stopColor="#38f038" />
        <stop offset="1" stopColor="#28a838" />
      </radialGradient>
    </defs>

    <polygon points="438,572 778,437 1148,561 809,695" fill="#b6cfe8" />

    <LineLoad x1={438} x2={778} top1={470} top2={337} bottom1={536} bottom2={403} opacity={0.14} />
    <LineLoad x1={778} x2={1148} top1={270} top2={393} bottom1={403} bottom2={526} opacity={0.14} />

    <Support x={778} y={438} />
    <Support x={438} y={573} />
    <Support x={809} y={696} />
    <Support x={1148} y={562} />

    {/* left beam */}
    <Beam
      colors={OUTER}
      points={[
        '427,549 765,415 778,420 438,555',
        '438,555 778,420 778,429 451,558',
        '438,555 451,558 778,429 778,437 438,572',
        '438,572 778,437 778,447 438,582',
        '438,582 778,447 778,455 438,591',
        '438,591 778,455 778,464 452,594',
      ]}
      opacity={0.97}
    />
    {/* back beam */}
    <Beam
      colors={OUTER}
      points={[
        '790,415 1160,538 1148,544 778,420',
        '778,420 1148,544 1137,547 778,429',
        '778,429 1137,547 1148,544 1148,561 778,437',
        '778,437 1148,561 1148,571 778,447',
        '778,447 1148,571 1148,579 778,455',
        '778,455 1148,579 1137,584 778,464',
      ]}
      opacity={0.97}
    />
    <path d="M438 572L809 695" stroke="#333" />

    <LineLoad x1={809} x2={1148} top1={594} top2={460} bottom1={659} bottom2={526} opacity={0.2} />

    {/* front beam */}
    <Beam
      colors={INNER}
      points={[
        '797,673 1148,534 1161,546 809,678',
        '809,678 1161,546 1148,552 822,681',
        '809,678 822,681 1148,552 1148,561 809,695',
        '809,695 1148,561 1148,570 809,704',
        '809,704 1148,570 1148,579 809,713',
        '809,713 1148,579 1161,582 823,717',
      ]}
      opacity={0.92}
    />

    <Support x={778} y={438} opacity={0.5} />
    <Support x={438} y={573} opacity={0.5} />
    <Support x={809} y={696} opacity={0.5} />
    <Support x={1148} y={562} opacity={0.5} />

    <g fill="#ff0000">
      <circle cx="438" cy="572" r="2" />
      <circle cx="809" cy="695" r="2" />
      <circle cx="1148" cy="561" r="2" />
    </g>
    <PointLoad x={438} y={524} />
    <PointLoad x={809} y={647} />
    <Axes x={778} y={438} />
    <Axes x={423} y={837} />
    <ViewCube />

    <g fontSize="11" fill="#9c3f6b">
      <text x="578" y="397">2.500</text>
      <text x="748" y="363">1.253</text>
      <text x="933" y="325">5.010</text>
      <text x="1118" y="486">1.253</text>
      <text x="949" y="520" fill="#b8405c">2.500</text>
      <text x="407" y="506" fill="#0aa5ff">0.026</text>
      <text x="778" y="629" fill="#0aa5ff">0.026</text>
    </g>
  </svg>
);

const MENU = ['Datei', 'Bearbeiten', 'Ansicht', 'Einfügen', 'Zuordnen', 'Berechnen', 'Ergebnisse', 'Extras', 'Optionen', 'Fenster'];

export default function App() {
  return (
    <div className="h-screen flex flex-col bg-white pt-[27px] pb-[21px] font-['Noto_Sans','Open_Sans',sans-serif] text-[11px] leading-[18px] text-black">
      <div className="relative flex-1 min-h-0 flex flex-col overflow-hidden rounded-lg border border-[#7c8fa3] border-b-[#1f4a8a] bg-[#f7f7f7]">
        <header className="h-[29px] shrink-0 flex items-center bg-[#eef3fb] pl-[6px] pr-3">
          <svg viewBox="0 0 18 18" className="w-4 h-4 mr-[7px] overflow-visible" aria-hidden="true">
            <path d="M2 4Q12-3 18 7L13 13Q12 7 5 7Z" fill="#3f6b9c" stroke="#26496f" />
            <path d="M9 5Q2 6 3 12A3.500 3.500 0 1 0 6 9" fill="none" stroke="#a57c10" strokeWidth="4" />
            <path d="M9 5Q2 6 3 12A3.500 3.500 0 1 0 6 9" fill="none" stroke="#f2c81e" strokeWidth="2.500" />
          </svg>
          <h1 className="flex-1">Dlubal RFEM | 6.05.0007 | load transfer.rf6</h1>
          <div className="flex gap-[32px] pr-1">
            <button aria-label="Minimieren"><Minus size={14} strokeWidth={1.5} /></button>
            <button aria-label="Maximieren"><Square size={13} strokeWidth={2} /></button>
            <button aria-label="Fenster schließen"><X size={15} strokeWidth={1.5} /></button>
          </div>
        </header>

        <nav className="h-[21px] shrink-0 flex items-center">
          <svg viewBox="0 0 16 12" className="w-4 h-3 mr-2" aria-hidden="true">
            <rect width="16" height="12" fill="#22306a" />
            <path d="M0 0H7L3 5L0 6ZM9 0H16V6Z" fill="#e8ebf4" />
            <path d="M0 8H16M0 7L7 1L16 8M8 1V8" stroke="#fff" strokeWidth=".8" fill="none" />
          </svg>
          <div className="flex gap-4">
            {MENU.map((m) => <button key={m}>{m}</button>)}
          </div>
          <div className="flex-1" />
          <span className="mr-[6px] text-[#555]">»</span>
          <svg viewBox="0 0 5 8" className="w-[5px] h-2 mr-1"><path d="M0 0L5 4L0 8Z" fill="#777" /></svg>
          <input aria-label="Schlüsselwort" placeholder="Geben Sie ein Schlüsselwort ein (Alt..." className="w-[228px] h-[19px] bg-[#e6e6f1] px-1 placeholder:text-[#80808a]" />
          <svg viewBox="0 0 16 12" className="w-4 h-3 mx-[6px]" fill="none" stroke="#888"><path d="M0 2H7M0 6H7M0 10H15M12 6L15 9" /><circle cx="10.500" cy="4" r="2.700" /></svg>
          <span className="ml-1 mr-2 whitespace-nowrap">Online License 3 | Cisca Tjoa | Dlubal Software, Inc.</span>
          <div className="flex items-center gap-[6px] pr-1 text-[#333]">
            <button aria-label="Dokument minimieren" className="pt-1"><Minus size={11} strokeWidth={4} /></button>
            <button aria-label="Dokument wiederherstellen"><Copy size={11} strokeWidth={2.5} className="-scale-x-100" /></button>
            <button aria-label="Dokument schließen"><X size={12} strokeWidth={4} /></button>
          </div>
        </nav>

        <div className="h-[27px] shrink-0 flex items-center border-t border-[#e2e2e2] pl-[6px]">
          <Grip />
          <Tools items={ROW_1A} />
          <div className="w-[227px] h-[21px] shrink-0 flex items-center bg-[#e6e6f1] pl-1">
            <span className="w-[11px] h-[11px] bg-[#ccffff] mr-[3px]" />
            <span className="w-[11px] h-[11px] bg-[#ccffff] mr-[3px]" />
            <span className="w-[30px] h-[13px] bg-black text-white text-center leading-[13px] font-semibold">D</span>
            <span className="w-[30px] pl-[5px]">LF1</span>
            <span className="w-px h-4 bg-white" />
            <select aria-label="Lastfall" className="flex-1 appearance-none bg-transparent pl-[6px]"><option>Self-weight</option></select>
            <ChevronDown size={12} className="text-[#555] mr-1" />
          </div>
          <button aria-label="Vorheriger" className="w-4 h-[21px] shrink-0 bg-[#c8c8c8] flex items-center justify-center">
            <svg viewBox="0 0 4 7" className="w-1 h-[7px]"><path d="M4 0L0 3.500L4 7Z" fill="#555" /></svg>
          </button>
          <button aria-label="Nächster" className="w-4 h-[21px] shrink-0 bg-[#e6e6f1] flex items-center justify-center">
            <svg viewBox="0 0 4 7" className="w-1 h-[7px]"><path d="M0 0L4 3.500L0 7Z" fill="#111" /></svg>
          </button>
          <Tools items={ROW_1B} />
          <span className="flex-1" /><span className="pr-[3px] text-[#555]">»</span>
        </div>

        <div className="h-[28px] shrink-0 flex items-center border-t border-[#e2e2e2] pl-[5px] mb-px">
          <Grip />
          <Tools items={ROW_2} />
          <span className="flex-1" /><span className="pr-[3px] text-[#555]">»</span>
        </div>

        <main className="relative flex-1 min-h-0 flex">
          <Navigator />
          <section className="relative flex-1 min-w-0 ml-[3px] bg-white">
            <ModelView />
            <div className="absolute left-[5px] top-1 leading-[17px]">
              <p>LF1 - Self-weight</p>
              <p>Lasten [kip], [kip/ft]</p>
            </div>
          </section>

          {/* marker frame and arrow over tree and model view */}
          <svg viewBox="0 0 450 340" className="absolute left-0 top-0 w-[450px] h-[340px] pointer-events-none" aria-hidden="true">
            <defs>
              <filter id="drop" x="-10%" y="-20%" width="120%" height="150%"><feDropShadow dx="1" dy="2" stdDeviation="1.5" floodOpacity=".4" /></filter>
            </defs>
            <g filter="url(#drop)">
              <rect x="72.500" y="275.500" width="222" height="19" fill="none" stroke="#f84848" strokeWidth="3" />
              <path d="M330 283L430 319" stroke="#f84848" strokeWidth="3.500" strokeLinecap="round" />
              <path d="M432 313L440 323L427 325Z" fill="#f84848" />
            </g>
          </svg>
        </main>

        <div className="h-[27px] shrink-0 flex items-center border-t border-[#e2e2e2]">
          <Tools items={['Koordinatensystem']} small />
          <div className="w-[122px] h-[21px] ml-[2px] shrink-0 flex items-center bg-[#e6e6f1] pl-1">
            <span className="w-[11px] h-[11px] bg-[#ccffff] mr-[5px]" />
            <select aria-label="Koordinatensystem" className="flex-1 min-w-0 appearance-none bg-transparent"><option>1 - Global XYZ</option></select>
            <ChevronDown size={12} className="text-[#555] mr-1" />
          </div>
          <Tools items={BOTTOM_A} small />
          <span className="pl-1 text-[#555]">»</span>
          <span className="flex-1" />
          <Tools items={BOTTOM_B} small />
          <span className="w-[2px] shrink-0" />
        </div>

        <footer className="h-4 shrink-0 flex items-center bg-[#e7e7f1] leading-4">
          <span className="flex-1" />
          <span className="w-[106px] h-[14px] border-l border-[#d0d0d8]" />
          <span className="w-[206px] pl-1 border-l border-[#d0d0d8]">KS: Global XYZ</span>
          <span className="w-[66px] pl-1 border-l border-[#d0d0d8] whitespace-nowrap">Ebene: XY</span>
          <span className="w-[76px] pl-1 border-l border-[#d0d0d8]">X: 11.14 ft</span>
          <span className="w-[76px] pl-1 border-l border-[#d0d0d8]">Y: -17.22 ft</span>
          <span className="w-[76px] pl-1 border-l border-[#d0d0d8]">Z: 0.00 ft</span>
          <svg viewBox="0 0 20 14" className="w-5 h-[14px] border-l border-[#d0d0d8]"><path d="M15 4h2M11 8h2M15 8h2M7 12h2M11 12h2M15 12h2" stroke="#aaa" strokeWidth="2" /></svg>
        </footer>
      </div>
    </div>
  );
}
